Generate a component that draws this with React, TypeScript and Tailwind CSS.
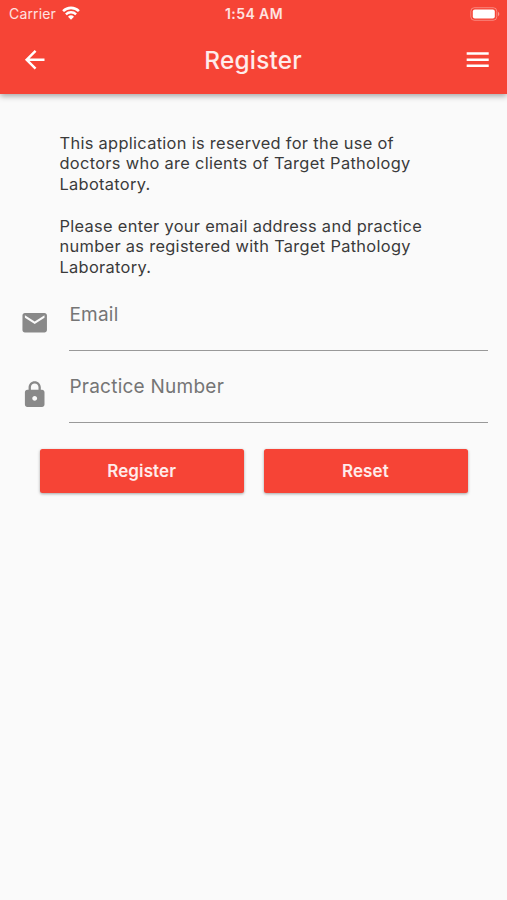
import { useState } from 'react';
import { MdArrowBack, MdEmail, MdLock, MdMenu } from 'react-icons/md';

function StatusBar() {
  return (
    <div className="grid h-[25px] grid-cols-3 items-center pl-[9px] pr-[7px] text-white">
      <div className="flex items-center gap-[6px] pt-[3px]">
        <span className="text-[14px] leading-none tracking-[0.15px] text-white/85">Carrier</span>
        <svg className="-mt-[2px] h-[14px] w-[18px]" viewBox="0 0 18 14" fill="none">
          <path d="M1.1 5.1a11.4 11.4 0 0 1 15.8 0" stroke="currentColor" strokeWidth="2.6" />
          <path d="M3.9 8.3a7.4 7.4 0 0 1 10.2 0" stroke="currentColor" strokeWidth="2.4" />
          <path d="M9 13.7 6 10.8a4.3 4.3 0 0 1 6 0Z" fill="currentColor" />
        </svg>
      </div>
      <span className="-ml-[1px] whitespace-nowrap pt-[2px] text-center text-[14px] font-semibold leading-none tracking-[0.4px] text-white/85">
        1:54 AM
      </span>
      <svg className="mt-[2px] h-[14px] w-[30px] justify-self-end" viewBox="0 0 30 14" fill="none">
        <rect x="0.8" y="0.7" width="26" height="12.6" rx="3.6" stroke="white" strokeOpacity="0.35" />
        <rect x="2.8" y="2.6" width="22" height="8.8" rx="2" fill="white" />
        <path d="M28 4.8c1.8.8 1.8 3.6 0 4.4Z" fill="white" fillOpacity="0.45" />
      </svg>
    </div>
  );
}

export default function App() {
  const [email, setEmail] = useState('');
  const [practiceNumber, setPracticeNumber] = useState('');

  const fields = [
    { icon: MdEmail, label: 'Email', type: 'email', value: email, onChange: setEmail },
    { icon: MdLock, label: 'Practice Number', type: 'text', value: practiceNumber, onChange: setPracticeNumber },
  ];

  const handleReset = () => {
    setEmail('');
    setPracticeNumber('');
  };

  return (
    <div className="min-h-screen bg-[#fafafa] font-['Inter',sans-serif]">
      {/* App bar */}
      <header className="h-[94px] bg-[#f64436] shadow-[0_2px_6px_rgba(0,0,0,0.36)]">
        <StatusBar />
        <div className="grid h-[69px] grid-cols-[1fr_auto_1fr] items-center pl-[20.4px] pr-[15px] text-white">
          <button type="button" aria-label="Back" className="justify-self-start">
            <MdArrowBack className="size-[29.4px]" />
          </button>
          <h1 className="-ml-[6px] pt-[2px] text-[24.3px] font-medium tracking-[0.25px] text-white/90">Register</h1>
          <button type="button" aria-label="Menu" className="justify-self-end">
            <MdMenu className="size-[29.4px]" />
          </button>
        </div>
      </header>

      <main>
        {/* Intro */}
        <div className="space-y-[20.8px] pl-[59.5px] pr-[60px] pt-[38.5px] text-[16.4px] leading-[20.8px] tracking-[0.31px] text-[#3a3a3a]">
          <p>
            This application is reserved for the use of
            <br />
            doctors who are clients of Target Pathology
            <br />
            Labotatory.
          </p>
          <p>
            Please enter your email address and practice
            <br />
            number as registered with Target Pathology
            <br />
            Laboratory.
          </p>
        </div>

        {/* Form */}
        <form onSubmit={(e) => e.preventDefault()} className="pt-[8.5px]">
          {fields.map((field) => {
            const Icon = field.icon;
            return (
              <label key={field.label} className="flex h-[72px] pl-[20.4px] pr-[19.5px]">
                <Icon className="mt-[21.6px] size-[29.4px] shrink-0 text-[#898989]" />
                <input
                  type={field.type}
                  value={field.value}
                  onChange={(e) => field.onChange(e.target.value)}
                  placeholder={field.label}
                  className="ml-[19.6px] h-[64px] min-w-0 flex-1 border-b border-[#999] pb-[7px] text-[19px] tracking-[0.25px] outline-none placeholder:text-[#757575]"
                />
              </label>
            );
          })}
          <div className="flex gap-[19.5px] pl-[40px] pr-[39px] pt-[18px] text-[17px] font-semibold tracking-[0.1px] text-white/90">
            <button type="submit" className="h-[44px] flex-1 rounded-[2.5px] bg-[#f64436] pr-[1px] pt-[2px] shadow-[0_1px_3px_rgba(0,0,0,0.35)]">
              Register
            </button>
            <button
              type="button"
              onClick={handleReset}
              className="h-[44px] flex-1 rounded-[2.5px] bg-[#f64436] pr-[1px] pt-[2px] shadow-[0_1px_3px_rgba(0,0,0,0.35)]"
            >
              Reset
            </button>
          </div>
        </form>
      </main>
    </div>
  );
}
